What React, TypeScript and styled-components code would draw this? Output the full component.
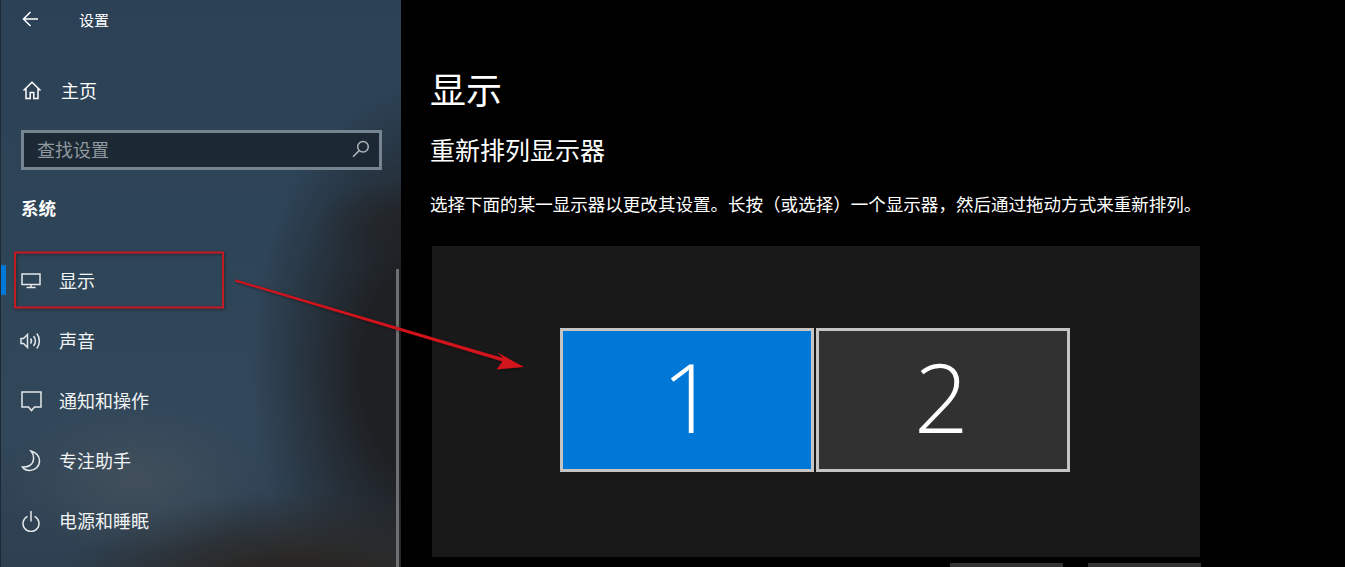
import styled, { createGlobalStyle } from "styled-components";

const cjk = `"Noto Sans CJK SC", "Noto Sans", sans-serif`;

const GlobalStyle = createGlobalStyle`
  html, body {
    margin: 0;
    height: 100%;
    background: #000;
    overflow: hidden;
  }
  * {
    box-sizing: border-box;
  }
`;

const Stroke = styled.svg`
  display: block;
  flex: none;
  fill: none;
  stroke: currentColor;
  stroke-width: 1.5;
`;

const BackIcon = () => (
  <Stroke width="18" height="16" viewBox="0 0 18 16" strokeWidth="1.2">
    <path d="M8.500 1 1.500 8l7 7M1.500 8H16" />
  </Stroke>
);

const HomeIcon = () => (
  <Stroke width="20" height="20" viewBox="0 0 20 20" strokeWidth="1.8">
    <path d="M1.500 10.500 10 2.200l8.500 8.300M4 8.500V18.500h4.200v-6h3.600v6H16V8.500" />
  </Stroke>
);

const SearchIcon = () => (
  <Stroke width="18" height="18" viewBox="0 0 18 18" strokeWidth="1.1">
    <circle cx="11" cy="6.800" r="5.300" />
    <path d="M7.200 10.600 1 16.800" />
  </Stroke>
);

const DisplayIcon = () => (
  <Stroke width="20" height="16" viewBox="0 0 20 16">
    <path d="M1 1h18v10.500H1zM10 11.500v3.500M5.500 14.500h9" />
  </Stroke>
);

const SoundIcon = () => (
  <Stroke width="22" height="18" viewBox="0 0 22 18" strokeWidth="1.6">
    <path d="M1 6.500h2.500L7.500 2.500v13l-4-4H1zM10.500 6.500c1.200 1.500 1.200 3.500 0 5M13.500 4c2.300 3 2.300 7 0 10M16.800 1.500c3.400 4.500 3.400 10.500 0 15" />
  </Stroke>
);

const NotifyIcon = () => (
  <Stroke width="21" height="21" viewBox="0 0 21 21">
    <path d="M1 1h19v15h-6.500l-3 3.500-3-3.500H1z" />
  </Stroke>
);

const MoonIcon = () => (
  <Stroke width="20" height="22" viewBox="0 0 20 22">
    <path d="M10 1c5 1.500 8.500 5 8.500 10 0 5.500-4.500 9.500-9.500 9.500-3.200 0-6-1.200-7.500-3.500 5.500 .5 10.300-2 11-7.500.4-3.300-.5-6.200-2.500-8.500z" />
  </Stroke>
);

const PowerIcon = () => (
  <Stroke width="18" height="22" viewBox="0 0 18 22" strokeWidth="1.6">
    <path d="M5.500 6.300a8 8 0 1 0 7 0M9 1v10.500" />
  </Stroke>
);

const Page = styled.div`
  position: relative;
  display: flex;
  width: 1345px;
  height: 567px;
  overflow: hidden;
  font-family: ${cjk};
  color: #fff;
  background: #000;
`;

const Sidebar = styled.aside`
  flex: none;
  width: 401px;
  height: 567px;
  position: relative;
  border-left: 1px solid #1d2a35;
  background:
    radial-gradient(ellipse 130px 75px at 135px 480px, rgba(72, 84, 93, 0.7), rgba(72, 84, 93, 0) 100%),
    radial-gradient(ellipse 250px 105px at 300px 595px, rgba(42, 40, 38, 1) 35%, rgba(42, 40, 38, 0) 100%),
    radial-gradient(ellipse 180px 290px at 430px 370px, rgba(30, 32, 35, 1) 38%, rgba(30, 32, 35, 0) 100%),
    radial-gradient(ellipse 90px 45px at 405px 225px, rgba(40, 37, 36, 0.8), rgba(40, 37, 36, 0) 100%),
    linear-gradient(180deg, #2c4155 0%, #2e4457 45%, #32475a 75%, #2e4050 100%);
`;

const Header = styled.header`
  display: flex;
  align-items: center;
  height: 38px;
  padding-left: 21px;
`;

const BackSlot = styled.span`
  display: flex;
  width: 57px;
`;

const HeaderTitle = styled.span`
  font-size: 15px;
`;

const HomeRow = styled.div`
  display: flex;
  align-items: center;
  gap: 19px;
  height: 60px;
  margin-top: 22px;
  padding-left: 21px;
  font-size: 18px;
`;

const SearchBox = styled.div`
  display: flex;
  align-items: center;
  justify-content: space-between;
  width: 361px;
  height: 40px;
  margin: 10px 0 0 20px;
  padding: 0 9px 2px 13px;
  border: 3px solid #76848f;
  background: #1c2833;
  color: #8f999f;
  font-size: 18px;
`;

const SearchIconSlot = styled.span`
  color: #aeb5ba;
`;

const GroupTitle = styled.h2`
  margin: 25px 0 0 20px;
  height: 26px;
  font-size: 17.500px;
  font-weight: 700;
  line-height: 26px;
`;

const NavList = styled.nav`
  margin-top: 30px;
`;

const NavRow = styled.div<{ $active?: boolean }>`
  position: relative;
  display: flex;
  align-items: center;
  height: 60px;
  font-size: 18px;
  color: #f2f4f5;

  &::before {
    content: "";
    display: ${(p) => (p.$active ? "block" : "none")};
    position: absolute;
    left: 0;
    top: 14px;
    width: 5px;
    height: 30px;
    background: #0078d7;
  }
`;

const NavIconSlot = styled.span`
  display: flex;
  justify-content: center;
  width: 24px;
  margin: 0 16px 0 18px;
  color: #e4e8ea;
`;

const NavLabel = styled.span`
  margin-top: -2px;
`;

const Scrollbar = styled.div`
  position: absolute;
  right: 2px;
  top: 269px;
  bottom: 0;
  width: 3px;
  background: #6d6f71;
`;

const Main = styled.main`
  flex: 1;
  padding: 60px 0 0 29px;
`;

const Title = styled.h1`
  margin: 0;
  height: 56px;
  font-size: 36px;
  font-weight: 400;
  line-height: 56px;
`;

const SubTitle = styled.h2`
  margin: 15px 0 0;
  height: 36px;
  font-size: 25px;
  font-weight: 400;
  line-height: 36px;
`;

const Description = styled.p`
  margin: 24px 0 0;
  height: 26px;
  font-size: 17.550px;
  line-height: 26px;
  white-space: nowrap;
`;

const Arrangement = styled.div`
  display: flex;
  align-items: center;
  justify-content: center;
  gap: 2px;
  width: 768px;
  height: 311px;
  margin: 29px 0 0 2px;
  padding: 0 2px 3px 0;
  background: #191919;
`;

const Monitor = styled.div<{ $selected?: boolean }>`
  display: flex;
  align-items: center;
  justify-content: center;
  width: 254px;
  height: 144px;
  padding: 0 ${(p) => (p.$selected ? 0 : "3px")} 9px ${(p) => (p.$selected ? "4px" : 0)};
  border: 3px solid #c4c4c4;
  background: ${(p) => (p.$selected ? "#0078d7" : "#313131")};
  font-family: "Open Sans", sans-serif;
  font-size: 96px;
  font-weight: 300;
  line-height: 1;
`;

const ButtonRow = styled.div`
  display: flex;
  gap: 25px;
  margin: 6px 0 0 520px;
`;

const GhostButton = styled.div`
  width: 113px;
  height: 32px;
  background: #333333;
`;

const Annotation = styled.svg`
  position: absolute;
  inset: 0;
  pointer-events: none;
`;

const navItems = [
  { label: "显示", icon: <DisplayIcon />, active: true },
  { label: "声音", icon: <SoundIcon /> },
  { label: "通知和操作", icon: <NotifyIcon /> },
  { label: "专注助手", icon: <MoonIcon /> },
  { label: "电源和睡眠", icon: <PowerIcon /> },
];

export default function App() {
  return (
    <Page>
      <GlobalStyle />
      <Sidebar>
        <Header>
          <BackSlot>
            <BackIcon />
          </BackSlot>
          <HeaderTitle>设置</HeaderTitle>
        </Header>
        <HomeRow>
          <HomeIcon />
          主页
        </HomeRow>
        <SearchBox>
          查找设置
          <SearchIconSlot>
            <SearchIcon />
          </SearchIconSlot>
        </SearchBox>
        <GroupTitle>系统</GroupTitle>
        <NavList>
          {navItems.map((item) => (
            <NavRow key={item.label} $active={item.active}>
              <NavIconSlot>{item.icon}</NavIconSlot>
              <NavLabel>{item.label}</NavLabel>
            </NavRow>
          ))}
        </NavList>
        <Scrollbar />
      </Sidebar>
      <Main>
        <Title>显示</Title>
        <SubTitle>重新排列显示器</SubTitle>
        <Description>
          选择下面的某一显示器以更改其设置。长按（或选择）一个显示器，然后通过拖动方式来重新排列。
        </Description>
        <Arrangement>
          <Monitor $selected>1</Monitor>
          <Monitor>2</Monitor>
        </Arrangement>
        <ButtonRow>
          <GhostButton />
          <GhostButton />
        </ButtonRow>
      </Main>
      <Annotation width="1345" height="567" viewBox="0 0 1345 567">
        <defs>
          <filter id="soft" x="-10%" y="-10%" width="120%" height="120%">
            <feDropShadow dx="1" dy="1" stdDeviation="1.500" floodColor="#000" floodOpacity="0.45" />
          </filter>
        </defs>
        <g filter="url(#soft)">
          <rect x="15" y="252.500" width="208" height="55" fill="none" stroke="#c01a20" strokeWidth="2" />
          <path d="M235.500 279.500 503 358 497.500 352.500 524 367 496.500 369.500 502.500 361.500 235 281.500z" fill="#d0121a" />
        </g>
      </Annotation>
    </Page>
  );
}
